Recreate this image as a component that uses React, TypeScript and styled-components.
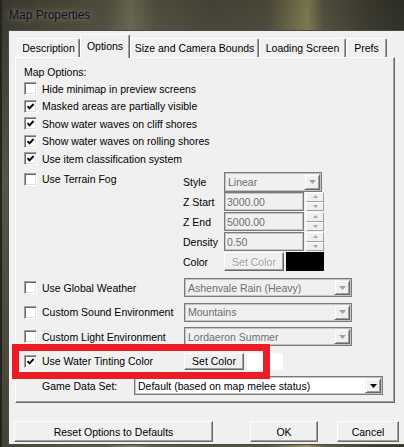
import styled, { createGlobalStyle } from "styled-components";

const GlobalStyle = createGlobalStyle`
  html, body {
    margin: 0;
    padding: 0;
  }
  body {
    width: 404px;
    height: 447px;
    overflow: hidden;
    background: #24231c;
    font-family: "Liberation Sans", Arial, sans-serif;
  }
`;

const Window = styled.div`
  box-sizing: border-box;
  width: 404px;
  height: 447px;
  display: flex;
  flex-direction: column;
  border-left: 2px solid #25241c;
  background:
    linear-gradient(180deg, rgba(20, 20, 14, 0.35) 0%, rgba(255, 255, 240, 0.06) 40%, rgba(0, 0, 0, 0.1) 100%),
    linear-gradient(90deg, #4a493b 0%, #5c5a49 12%, #6a6854 26%, #8d8a6d 32%, #6b6854 38%, #5b5947 52%,
      #625f4c 66%, #9c9666 74%, #aaa36c 76%, #6c6953 80%, #4d4b3d 90%, #3b3a30 100%);
`;

const TitleBar = styled.div`
  height: 30px;
  display: flex;
  align-items: center;
  padding-left: 7px;
  font-size: 12px;
  color: #111122;
  text-shadow: 0 0 6px rgba(235, 235, 215, 0.55);
`;

const Client = styled.div`
  flex: 1;
  margin: 0 0 2px 6px;
  padding: 4px 0 0 6px;
  background: #f0f0f0;
  border-top: 1px solid #4a4a44;
  border-left: 1px solid #4a4a44;
  border-bottom: 1px solid #4a4a44;
  font-size: 10.5px;
  color: #000;
`;

const TabStrip = styled.div`
  display: flex;
  align-items: flex-end;
  height: 22px;
  padding-left: 2px;
`;

const Tab = styled.div<{ $w: number; $active?: boolean }>`
  box-sizing: border-box;
  position: relative;
  z-index: ${(p) => (p.$active ? 1 : 0)};
  width: ${(p) => p.$w}px;
  height: ${(p) => (p.$active ? 24 : 19)}px;
  margin-bottom: ${(p) => (p.$active ? -1 : 0)}px;
  padding-bottom: ${(p) => (p.$active ? 2 : 0)}px;
  display: flex;
  align-items: center;
  justify-content: center;
  background: #f0f0f0;
  border: 1px solid;
  border-color: #ffffff #696969 transparent #ffffff;
  border-bottom: none;
  border-radius: 2px 2px 0 0;
  box-shadow: inset -1px 0 0 #a0a0a0;
  white-space: nowrap;
`;

const Panel = styled.div`
  box-sizing: border-box;
  width: 380px;
  height: 346px;
  padding: 7px 8px 0 8px;
  display: flex;
  flex-direction: column;
  border: 1px solid;
  border-color: #ffffff #696969 #696969 #ffffff;
  box-shadow: inset -1px -1px 0 #a0a0a0;
`;

const SectionLabel = styled.div`
  height: 15px;
  line-height: 15px;
`;

const CheckRow = styled.div<{ $mt?: number }>`
  display: flex;
  align-items: center;
  gap: 5px;
  height: 17.5px;
  margin-top: ${(p) => p.$mt ?? 0}px;
  white-space: nowrap;
`;

const Box = styled.span`
  box-sizing: border-box;
  flex: none;
  width: 13px;
  height: 13px;
  display: flex;
  align-items: center;
  justify-content: center;
  background: #ffffff;
  border: 1px solid;
  border-color: #a0a0a0 #ffffff #ffffff #a0a0a0;
  box-shadow: inset 1px 1px 0 #696969, inset -1px -1px 0 #e3e3e3;
`;

const FogBlock = styled.div`
  display: flex;
  height: 104.5px;
`;

const FogLeft = styled.div`
  width: 159px;
`;

const FogGrid = styled.div`
  margin-top: 4.5px;
  display: grid;
  grid-template-columns: 41px auto;
  grid-auto-rows: 20px;
  align-items: start;
`;

const FieldLabel = styled.div`
  line-height: 20px;
  white-space: nowrap;
`;

const Controls = styled.div`
  display: flex;
  align-items: flex-start;
`;

const Combo = styled.div<{ $w: number; $h: number; $enabled?: boolean }>`
  box-sizing: border-box;
  width: ${(p) => p.$w}px;
  height: ${(p) => p.$h}px;
  display: flex;
  align-items: center;
  padding: 0 1px 0 3px;
  background: ${(p) => (p.$enabled ? "#ffffff" : "#f0f0f0")};
  color: ${(p) => (p.$enabled ? "#000000" : "#6d6d72")};
  border: 1px solid #7a7a7a;
  box-shadow: inset 0 0 0 1px #c4c4c4;
  white-space: nowrap;
`;

const ComboText = styled.span`
  flex: 1;
`;

const ArrowButton = styled.span`
  box-sizing: border-box;
  flex: none;
  width: 16px;
  height: calc(100% - 2px);
  display: flex;
  align-items: center;
  justify-content: center;
  background: #f0f0f0;
  border: 1px solid;
  border-color: #f0f0f0 #696969 #696969 #f0f0f0;
  box-shadow: inset 1px 1px 0 #ffffff, inset -1px -1px 0 #a0a0a0;
`;

const NumField = styled.div`
  box-sizing: border-box;
  width: 80px;
  height: 19px;
  display: flex;
  align-items: center;
  padding-left: 2px;
  color: #6d6d72;
  border: 1px solid #7a7a7a;
  box-shadow: inset 0 0 0 1px #c4c4c4;
`;

const Spinner = styled.div`
  margin-left: 2px;
  width: 18px;
  height: 19px;
  display: flex;
  flex-direction: column;
`;

const SpinHalf = styled.span`
  box-sizing: border-box;
  flex: 1;
  display: flex;
  align-items: center;
  justify-content: center;
  background: #f0f0f0;
  border: 1px solid;
  border-color: #ffffff #a0a0a0 #a0a0a0 #ffffff;
`;

const Button = styled.div<{ $w: number; $h?: number; $disabled?: boolean }>`
  box-sizing: border-box;
  flex: none;
  width: ${(p) => p.$w}px;
  height: ${(p) => p.$h ?? 21}px;
  display: flex;
  align-items: center;
  justify-content: center;
  background: #f0f0f0;
  color: ${(p) => (p.$disabled ? "#a0a0a0" : "#000000")};
  text-shadow: ${(p) => (p.$disabled ? "1px 1px 0 #ffffff" : "none")};
  border: 1px solid;
  border-color: #ffffff #696969 #696969 #ffffff;
  box-shadow: inset -1px -1px 0 #a0a0a0;
  white-space: nowrap;
`;

const Swatch = styled.div<{ $color: string; $w: number; $h: number; $ml: number }>`
  width: ${(p) => p.$w}px;
  height: ${(p) => p.$h}px;
  margin-left: ${(p) => p.$ml}px;
  background: ${(p) => p.$color};
`;

const OptionRow = styled.div<{ $mt: number }>`
  position: relative;
  display: flex;
  align-items: center;
  height: 20px;
  margin-top: ${(p) => p.$mt}px;
`;

const OptionLabel = styled.div<{ $w: number; $indent?: number }>`
  display: flex;
  align-items: center;
  gap: 5px;
  width: ${(p) => p.$w}px;
  padding-left: ${(p) => p.$indent ?? 0}px;
  box-sizing: border-box;
  white-space: nowrap;
`;

const Highlight = styled.div`
  position: absolute;
  z-index: 2;
  left: -12px;
  top: -7px;
  width: 258px;
  height: 35px;
  box-sizing: border-box;
  border: 7px solid #ec1c24;
  pointer-events: none;
`;

const ButtonRow = styled.div`
  display: flex;
  justify-content: space-between;
  width: 385px;
  margin: 18px 0 0 -1px;
`;

const RightButtons = styled.div`
  display: flex;
  gap: 19px;
`;

function CheckBox({ checked }: { checked?: boolean }) {
  return (
    <Box>
      {checked && (
        <svg width="9" height="9" viewBox="0 0 9 9">
          <path d="M1.5 4.2 L3.5 6.3 L7.6 2" fill="none" stroke="#000" strokeWidth="1.9" />
        </svg>
      )}
    </Box>
  );
}

function DownArrow({ enabled }: { enabled?: boolean }) {
  return (
    <svg width="7" height="4" viewBox="0 0 7 4">
      <path d="M0 0 H7 L3.5 4 Z" fill={enabled ? "#000" : "#a0a0a0"} />
    </svg>
  );
}

function Dropdown({ text, w, h, enabled }: { text: string; w: number; h: number; enabled?: boolean }) {
  return (
    <Combo $w={w} $h={h} $enabled={enabled}>
      <ComboText>{text}</ComboText>
      <ArrowButton>
        <DownArrow enabled={enabled} />
      </ArrowButton>
    </Combo>
  );
}

function NumberInput({ value }: { value: string }) {
  return (
    <Controls>
      <NumField>{value}</NumField>
      <Spinner>
        <SpinHalf>
          <svg width="5" height="3" viewBox="0 0 5 3">
            <path d="M0 3 H5 L2.5 0 Z" fill="#a8a8a8" />
          </svg>
        </SpinHalf>
        <SpinHalf>
          <svg width="5" height="3" viewBox="0 0 5 3">
            <path d="M0 0 H5 L2.5 3 Z" fill="#a8a8a8" />
          </svg>
        </SpinHalf>
      </Spinner>
    </Controls>
  );
}

const mapOptions = [
  { label: "Hide minimap in preview screens", checked: false },
  { label: "Masked areas are partially visible", checked: true },
  { label: "Show water waves on cliff shores", checked: true },
  { label: "Show water waves on rolling shores", checked: true },
  { label: "Use item classification system", checked: true },
];

const tabs = [
  { label: "Description", w: 63 },
  { label: "Options", w: 50, active: true },
  { label: "Size and Camera Bounds", w: 129 },
  { label: "Loading Screen", w: 87 },
  { label: "Prefs", w: 41 },
];

const environment = [
  { label: "Use Global Weather", value: "Ashenvale Rain (Heavy)", mt: 5.5 },
  { label: "Custom Sound Environment", value: "Mountains", mt: 4.5 },
  { label: "Custom Light Environment", value: "Lordaeron Summer", mt: 4.5 },
];

export default function App() {
  return (
    <>
      <GlobalStyle />
      <Window>
        <TitleBar>Map Properties</TitleBar>
        <Client>
          <TabStrip>
            {tabs.map((t) => (
              <Tab key={t.label} $w={t.w} $active={t.active}>
                {t.label}
              </Tab>
            ))}
          </TabStrip>
          <Panel>
            <SectionLabel>Map Options:</SectionLabel>
            {mapOptions.map((o) => (
              <CheckRow key={o.label}>
                <CheckBox checked={o.checked} />
                {o.label}
              </CheckRow>
            ))}

            <FogBlock>
              <FogLeft>
                <CheckRow $mt={2.75}>
                  <CheckBox />
                  Use Terrain Fog
                </CheckRow>
              </FogLeft>
              <FogGrid>
                <FieldLabel>Style</FieldLabel>
                <Dropdown text="Linear" w={98} h={20} />
                <FieldLabel>Z Start</FieldLabel>
                <NumberInput value="3000.00" />
                <FieldLabel>Z End</FieldLabel>
                <NumberInput value="5000.00" />
                <FieldLabel>Density</FieldLabel>
                <NumberInput value="0.50" />
                <FieldLabel>Color</FieldLabel>
                <Controls>
                  <Button $w={60} $h={19} $disabled>
                    Set Color
                  </Button>
                  <Swatch $color="#000000" $w={38} $h={19} $ml={2} />
                </Controls>
              </FogGrid>
            </FogBlock>

            {environment.map((e) => (
              <OptionRow key={e.label} $mt={e.mt}>
                <OptionLabel $w={160}>
                  <CheckBox />
                  {e.label}
                </OptionLabel>
                <Dropdown text={e.value} w={168} h={19} />
              </OptionRow>
            ))}

            <OptionRow $mt={4.5}>
              <Highlight />
              <OptionLabel $w={160}>
                <CheckBox checked />
                Use Water Tinting Color
              </OptionLabel>
              <Button $w={60} $h={17}>
                Set Color
              </Button>
              <Swatch $color="#ffffff" $w={36} $h={17} $ml={3} />
            </OptionRow>

            <OptionRow $mt={4.5}>
              <OptionLabel $w={110} $indent={18}>
                Game Data Set:
              </OptionLabel>
              <Dropdown text="Default (based on map melee status)" w={249} h={19} enabled />
            </OptionRow>
          </Panel>

          <ButtonRow>
            <Button $w={199}>Reset Options to Defaults</Button>
            <RightButtons>
              <Button $w={68}>OK</Button>
              <Button $w={62}>Cancel</Button>
            </RightButtons>
          </ButtonRow>
        </Client>
      </Window>
    </>
  );
}
